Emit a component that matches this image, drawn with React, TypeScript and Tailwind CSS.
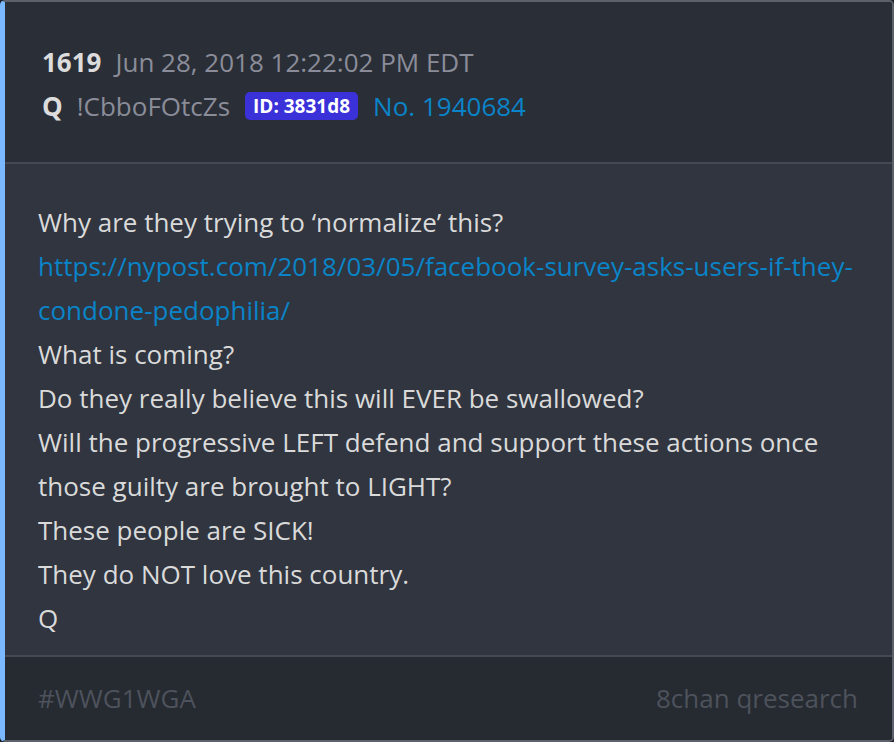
import React from 'react';

const lines = [
  'What is coming?',
  'Do they really believe this will EVER be swallowed?',
  'Will the progressive LEFT defend and support these actions once those guilty are brought to LIGHT?',
  'These people are SICK!',
  'They do NOT love this country.',
  'Q',
];

export default function App() {
  return (
    <div className="w-[894px] h-[742px] bg-[#1d2026] font-['Open_Sans',sans-serif]">
      <div className="h-full flex flex-col overflow-hidden rounded-[5px] border-2 border-[#5d616c] border-l-[5px] border-l-[#7ab8ff]">
        {/* cabecalho */}
        <div className="bg-[#2a2e37] pl-[37px] pr-8 pt-[38px] pb-[34px] text-[26px] leading-[44px] border-b-2 border-[#444954]">
          <div className="flex items-baseline gap-[14px]">
            <span className="font-bold text-[#dcdcdc]">1619</span>
            <span className="text-[#8a8d99]">Jun 28, 2018 12:22:02 PM EDT</span>
          </div>
          <div className="flex items-center gap-[15px]">
            <span className="font-bold text-[#dcdcdc] mr-[-1px]">Q</span>
            <span className="text-[#8a8d99]">!CbboFOtcZs</span>
            <span className="bg-[#3b31d8] text-white font-bold text-[19px] leading-[28px] px-[8px] rounded-[5px]">ID: 3831d8</span>
            <span className="text-[#0a84c8]">No. 1940684</span>
          </div>
        </div>

        {/* corpo */}
        <div className="flex-1 bg-[#30353f] pl-[33px] pr-[30px] pt-[36px] text-[26px] leading-[44px] text-[#dadada]">
          <div>Why are they trying to ‘normalize’ this?</div>
          <div className="text-[#0a84c8]">https://nypost.com/2018/03/05/facebook-survey-asks-users-if-they-condone-pedophilia/</div>
          {lines.map((l) => (
            <div key={l}>{l}</div>
          ))}
        </div>

        {/* rodape */}
        <div className="h-[85px] flex items-center justify-between bg-[#262a31] border-t-2 border-[#444954] pl-[33px] pr-[34px] text-[26px] text-[#4d525c]">
          <span>#WWG1WGA</span>
          <span>8chan qresearch</span>
        </div>
      </div>
    </div>
  );
}
